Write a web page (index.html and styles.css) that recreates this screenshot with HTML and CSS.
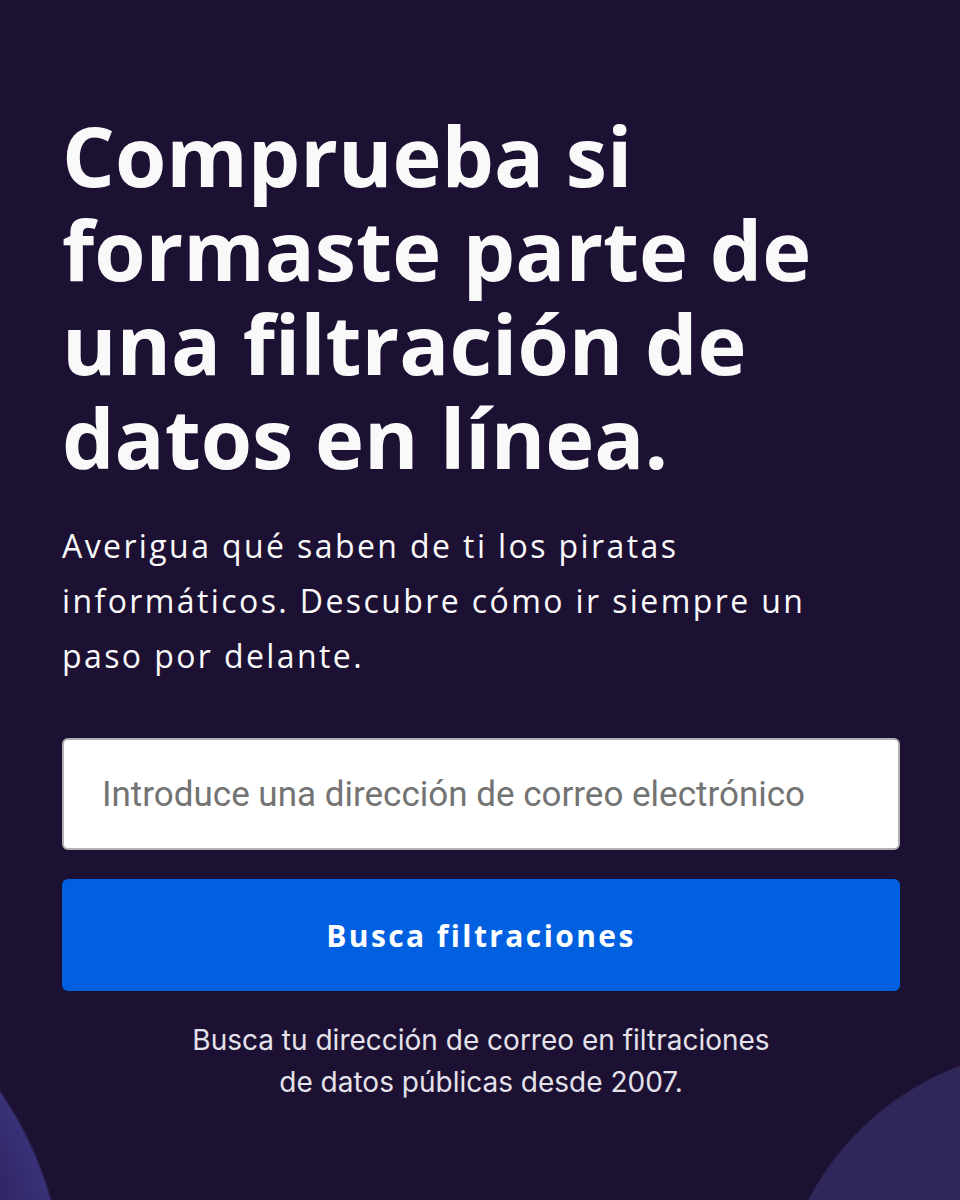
FILE: index.html
```html
<!DOCTYPE html>
<html lang="es">
<head>
<meta charset="utf-8">
<title>Comprueba filtraciones</title>
<link rel="stylesheet" href="styles.css">
</head>
<body>
<main class="hero">
  <h1 class="title">Comprueba si formaste parte de una filtración de datos en línea.</h1>
  <p class="lead">Averigua qué saben de ti los piratas informáticos. Descubre cómo ir siempre un paso por delante.</p>
  <form class="form">
    <input class="email" type="email" placeholder="Introduce una dirección de correo electrónico">
    <button class="submit" type="button">Busca filtraciones</button>
  </form>
  <p class="note">Busca tu dirección de correo en filtraciones<br>de datos públicas desde 2007.</p>
</main>
</body>
</html>
```
FILE: styles.css
```css
html {
  background: #1d1133;
}
body {
  margin: 0;
  min-height: 1200px;
  background-color: #1d1133;
  background-image:
    radial-gradient(circle 285px at 1060px 1332px, #2f2659 99.5%, transparent 100%),
    radial-gradient(circle 370px at -304px 1300px, #22184a 0, #2c2462 85%, #3a3278 99.3%, transparent 100%);
  background-repeat: no-repeat;
  overflow: hidden;
}
.hero {
  padding: 108px 60px 0 62px;
  display: flex;
  flex-direction: column;
}
.title {
  margin: 0;
  font-family: "Open Sans", sans-serif;
  font-weight: 700;
  font-size: 83px;
  line-height: 94px;
  color: #f9f9fa;
  max-width: 820px;
}
.lead {
  margin: 34px 0 0;
  font-family: "Open Sans", sans-serif;
  font-size: 32px;
  line-height: 55px;
  letter-spacing: 2.4px;
  color: #f9f9fa;
  max-width: 800px;
}
.form {
  margin-top: 55px;
  display: flex;
  flex-direction: column;
  gap: 29px;
}
.email {
  box-sizing: border-box;
  height: 112px;
  width: 100%;
  border: 2px solid #b1b1b3;
  border-radius: 6px;
  background: #fff;
  padding: 0 38px;
  font-family: Roboto, sans-serif;
  font-size: 35px;
  color: #0c0c0d;
}
.email::placeholder {
  color: #737373;
}
.submit {
  height: 112px;
  border: 0;
  border-radius: 6px;
  background: #0060df;
  color: #fff;
  font-family: "Open Sans", sans-serif;
  font-weight: 700;
  font-size: 30px;
  letter-spacing: 2.4px;
}
.note {
  margin: 28px 0 0;
  text-align: center;
  font-family: Inter, sans-serif;
  font-size: 28px;
  line-height: 42px;
  color: #e4e2ea;
}
```
